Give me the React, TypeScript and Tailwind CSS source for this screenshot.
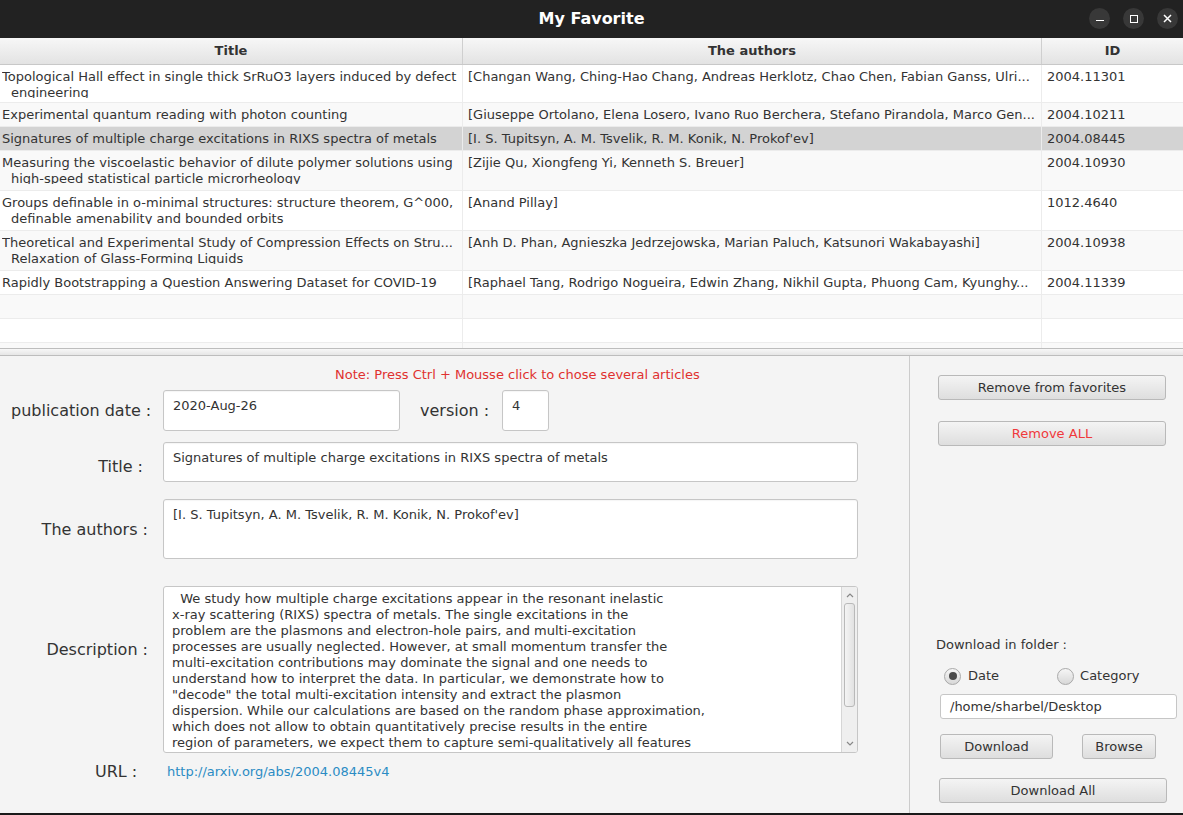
import React from "react";

const font = { fontFamily: '"DejaVu Sans", "Liberation Sans", sans-serif' };

type Row = { title: string[]; authors: string; id: string; h: string; selected?: boolean };

const rows: Row[] = [
  {
    title: ["Topological Hall effect in single thick SrRuO3 layers induced by defect", "engineering"],
    authors: "[Changan Wang, Ching-Hao Chang, Andreas Herklotz, Chao Chen, Fabian Ganss, Ulri...",
    id: "2004.11301",
    h: "h-[38px]",
  },
  {
    title: ["Experimental quantum reading with photon counting"],
    authors: "[Giuseppe Ortolano, Elena Losero, Ivano Ruo Berchera, Stefano Pirandola, Marco Gen...",
    id: "2004.10211",
    h: "h-[24px]",
  },
  {
    title: ["Signatures of multiple charge excitations in RIXS spectra of metals"],
    authors: "[I. S. Tupitsyn, A. M. Tsvelik, R. M. Konik, N. Prokof'ev]",
    id: "2004.08445",
    h: "h-[24px]",
    selected: true,
  },
  {
    title: ["Measuring the viscoelastic behavior of dilute polymer solutions using", "high-speed statistical particle microrheology"],
    authors: "[Zijie Qu, Xiongfeng Yi, Kenneth S. Breuer]",
    id: "2004.10930",
    h: "h-[40px]",
  },
  {
    title: ["Groups definable in o-minimal structures: structure theorem, G^000,", "definable amenability and bounded orbits"],
    authors: "[Anand Pillay]",
    id: "1012.4640",
    h: "h-[40px]",
  },
  {
    title: ["Theoretical and Experimental Study of Compression Effects on Stru...", "Relaxation of Glass-Forming Liquids"],
    authors: "[Anh D. Phan, Agnieszka Jedrzejowska, Marian Paluch, Katsunori Wakabayashi]",
    id: "2004.10938",
    h: "h-[40px]",
  },
  {
    title: ["Rapidly Bootstrapping a Question Answering Dataset for COVID-19"],
    authors: "[Raphael Tang, Rodrigo Nogueira, Edwin Zhang, Nikhil Gupta, Phuong Cam, Kyunghy...",
    id: "2004.11339",
    h: "h-[24px]",
  },
];

const description = [
  "  We study how multiple charge excitations appear in the resonant inelastic",
  "x-ray scattering (RIXS) spectra of metals. The single excitations in the",
  "problem are the plasmons and electron-hole pairs, and multi-excitation",
  "processes are usually neglected. However, at small momentum transfer the",
  "multi-excitation contributions may dominate the signal and one needs to",
  "understand how to interpret the data. In particular, we demonstrate how to",
  "\"decode\" the total multi-excitation intensity and extract the plasmon",
  "dispersion. While our calculations are based on the random phase approximation,",
  "which does not allow to obtain quantitatively precise results in the entire",
  "region of parameters, we expect them to capture semi-qualitatively all features",
];

function Btn({ children, className = "", red = false }: { children: React.ReactNode; className?: string; red?: boolean }) {
  return (
    <div
      className={`flex h-[25px] items-center justify-center rounded-[3px] border border-[#b9b9b9] bg-gradient-to-b from-[#f4f4f4] to-[#dedede] text-[13px] ${red ? "text-[#f0393c]" : "text-[#333]"} ${className}`}
    >
      {children}
    </div>
  );
}

function Field({ children, className = "" }: { children?: React.ReactNode; className?: string }) {
  return (
    <div className={`rounded-[3px] border border-[#c6c6c6] bg-white px-[9px] pt-[5px] text-[13px] text-[#333] shadow-[inset_0_1px_1px_rgba(0,0,0,0.04)] ${className}`}>
      {children}
    </div>
  );
}

function Radio({ checked }: { checked?: boolean }) {
  return (
    <div className="flex h-[17px] w-[17px] items-center justify-center rounded-full border border-[#a9a9a9] bg-gradient-to-b from-[#f6f6f6] to-[#d8d8d8]">
      {checked && <div className="h-[8px] w-[8px] rounded-full bg-[#4a4a4a]" />}
    </div>
  );
}

export default function App() {
  return (
    <div className="flex h-[815px] w-[1183px] flex-col overflow-hidden bg-[#f4f4f4] text-[#333]" style={font}>
      {/* Title bar */}
      <div className="relative flex h-[38px] shrink-0 items-center justify-center bg-[#222222]">
        <span className="text-[16px] font-bold text-white">My Favorite</span>
        <div className="absolute right-[5px] top-[8px] flex gap-[13px]">
          <div className="flex h-[21px] w-[21px] items-center justify-center rounded-full bg-[#383838]">
            <div className="mt-[4px] h-[1.5px] w-[8px] bg-white" />
          </div>
          <div className="flex h-[21px] w-[21px] items-center justify-center rounded-full bg-[#383838]">
            <div className="h-[8px] w-[8px] border-[1.5px] border-white" />
          </div>
          <div className="flex h-[21px] w-[21px] items-center justify-center rounded-full bg-[#383838]">
            <svg width="9" height="9" viewBox="0 0 9 9">
              <path d="M1 1 L8 8 M8 1 L1 8" stroke="white" strokeWidth="1.5" />
            </svg>
          </div>
        </div>
      </div>

      {/* Table */}
      <div className="flex h-[310px] shrink-0 flex-col overflow-hidden bg-white">
        <div className="flex h-[27px] shrink-0 border-b border-[#c8c8c8] bg-gradient-to-b from-[#f7f7f7] to-[#e3e3e3] text-[13px] font-bold text-[#333]">
          <div className="flex w-[463px] items-center justify-center border-r border-[#cfcfcf]">Title</div>
          <div className="flex w-[579px] items-center justify-center border-r border-[#cfcfcf]">The authors</div>
          <div className="flex flex-1 items-center justify-center">ID</div>
        </div>
        {rows.map((r, i) => (
          <div
            key={r.id}
            className={`flex shrink-0 overflow-hidden border-b border-[#ececec] text-[13px] leading-[16px] ${r.h} ${
              r.selected ? "bg-[#d3d3d3]" : i % 2 === 1 ? "bg-[#f9f9f9]" : "bg-white"
            }`}
          >
            <div className="w-[463px] whitespace-nowrap border-r border-[#ececec] pl-[2px] pt-[4px]">
              <div className="h-[29px] overflow-hidden">
                {r.title.map((t, j) => (
                  <div key={j} className={j > 0 ? "pl-[9px]" : ""}>
                    {t}
                  </div>
                ))}
              </div>
            </div>
            <div className="w-[579px] overflow-hidden whitespace-nowrap border-r border-[#ececec] pl-[5px] pt-[4px]">{r.authors}</div>
            <div className="flex-1 overflow-hidden whitespace-nowrap pl-[5px] pt-[4px]">{r.id}</div>
          </div>
        ))}
        {[0, 1].map((k) => (
          <div key={k} className={`flex h-[24px] shrink-0 border-b border-[#ececec] ${k === 0 ? "bg-[#f9f9f9]" : "bg-white"}`}>
            <div className="w-[463px] border-r border-[#ececec]" />
            <div className="w-[579px] border-r border-[#ececec]" />
            <div className="flex-1" />
          </div>
        ))}
        <div className="flex flex-1 bg-[#f9f9f9]">
          <div className="w-[463px] border-r border-[#ececec]" />
          <div className="w-[579px] border-r border-[#ececec]" />
          <div className="flex-1" />
        </div>
      </div>

      {/* Split divider */}
      <div className="h-[8px] shrink-0 border-y border-[#bdbdbd] bg-gradient-to-b from-[#f7f7f7] to-[#e6e6e6]" />

      {/* Lower pane */}
      <div className="flex min-h-0 flex-1">
        {/* Left form */}
        <div className="flex w-[910px] shrink-0 flex-col border-r border-[#cccccc]">
          <div className="mt-[10px] h-[18px] pl-[335px] text-[13px] leading-[18px] text-[#e0312f]">
            Note: Press Ctrl + Mousse click to chose several articles
          </div>

          <div className="mt-[6px] flex items-start text-[16px]">
            <div className="w-[163px] pl-[11px] pt-[11px] leading-[19px]">publication date :</div>
            <Field className="h-[41px] w-[237px]">2020-Aug-26</Field>
            <div className="w-[102px] pl-[20px] pt-[11px] leading-[19px]">version :</div>
            <Field className="h-[41px] w-[47px]">4</Field>
          </div>

          <div className="mt-[11px] flex items-start text-[16px]">
            <div className="w-[163px] pr-[20px] pt-[15px] text-right leading-[19px]">Title :</div>
            <Field className="h-[40px] w-[695px]">Signatures of multiple charge excitations in RIXS spectra of metals</Field>
          </div>

          <div className="mt-[17px] flex items-start text-[16px]">
            <div className="w-[163px] pr-[15px] pt-[21px] text-right leading-[19px]">The authors :</div>
            <Field className="h-[60px] w-[695px]">[I. S. Tupitsyn, A. M. Tsvelik, R. M. Konik, N. Prokof'ev]</Field>
          </div>

          <div className="mt-[27px] flex items-start text-[16px]">
            <div className="w-[163px] pr-[15px] pt-[54px] text-right leading-[19px]">Description :</div>
            <div className="flex h-[167px] w-[695px] overflow-hidden rounded-[3px] border border-[#c6c6c6] bg-white">
              <div className="flex-1 overflow-hidden whitespace-pre pl-[8px] pt-[4px] text-[13px] leading-[16px] text-[#333]">
                {description.map((l, i) => (
                  <div key={i}>{l}</div>
                ))}
              </div>
              <div className="flex w-[16px] flex-col items-center border-l border-[#d6d6d6] bg-[#efefef]">
                <svg width="10" height="14" viewBox="0 0 10 14" className="mt-[1px]">
                  <path d="M2 9 L5 6 L8 9" stroke="#888" strokeWidth="1.2" fill="none" />
                </svg>
                <div className="mt-[1px] h-[104px] w-[11px] rounded-[3px] border border-[#b9b9b9] bg-gradient-to-r from-[#f4f4f4] to-[#e2e2e2]" />
                <div className="flex-1" />
                <svg width="10" height="14" viewBox="0 0 10 14" className="mb-[1px]">
                  <path d="M2 5 L5 8 L8 5" stroke="#888" strokeWidth="1.2" fill="none" />
                </svg>
              </div>
            </div>
          </div>

          <div className="mt-[10px] flex h-[18px] items-center">
            <div className="w-[163px] pl-[95px] text-[16px] leading-[18px]">URL :</div>
            <div className="pl-[4px] text-[13px] text-[#2b8cc4]">http://arxiv.org/abs/2004.08445v4</div>
          </div>
        </div>

        {/* Right actions */}
        <div className="flex flex-1 flex-col">
          <Btn className="ml-[28px] mt-[19px] w-[228px]">Remove from favorites</Btn>
          <Btn className="ml-[28px] mt-[21px] w-[228px]" red>
            Remove ALL
          </Btn>
          <div className="ml-[26px] mt-[191px] h-[16px] text-[13px] leading-[16px]">Download in folder :</div>
          <div className="ml-[34px] mt-[14px] flex h-[18px] items-center text-[13px]">
            <Radio checked />
            <span className="ml-[7px]">Date</span>
            <div className="ml-[58px]">
              <Radio />
            </div>
            <span className="ml-[6px]">Category</span>
          </div>
          <div className="ml-[30px] mt-[9px] flex h-[25px] w-[237px] items-center rounded-[3px] border border-[#c6c6c6] bg-white pl-[9px] text-[13px]">
            /home/sharbel/Desktop
          </div>
          <div className="ml-[30px] mt-[15px] flex">
            <Btn className="w-[113px]">Download</Btn>
            <Btn className="ml-[29px] w-[74px]">Browse</Btn>
          </div>
          <Btn className="ml-[29px] mt-[19px] w-[228px]">Download All</Btn>
        </div>
      </div>
      <div className="h-[2px] shrink-0 bg-[#1a1a1a]" />
    </div>
  );
}
